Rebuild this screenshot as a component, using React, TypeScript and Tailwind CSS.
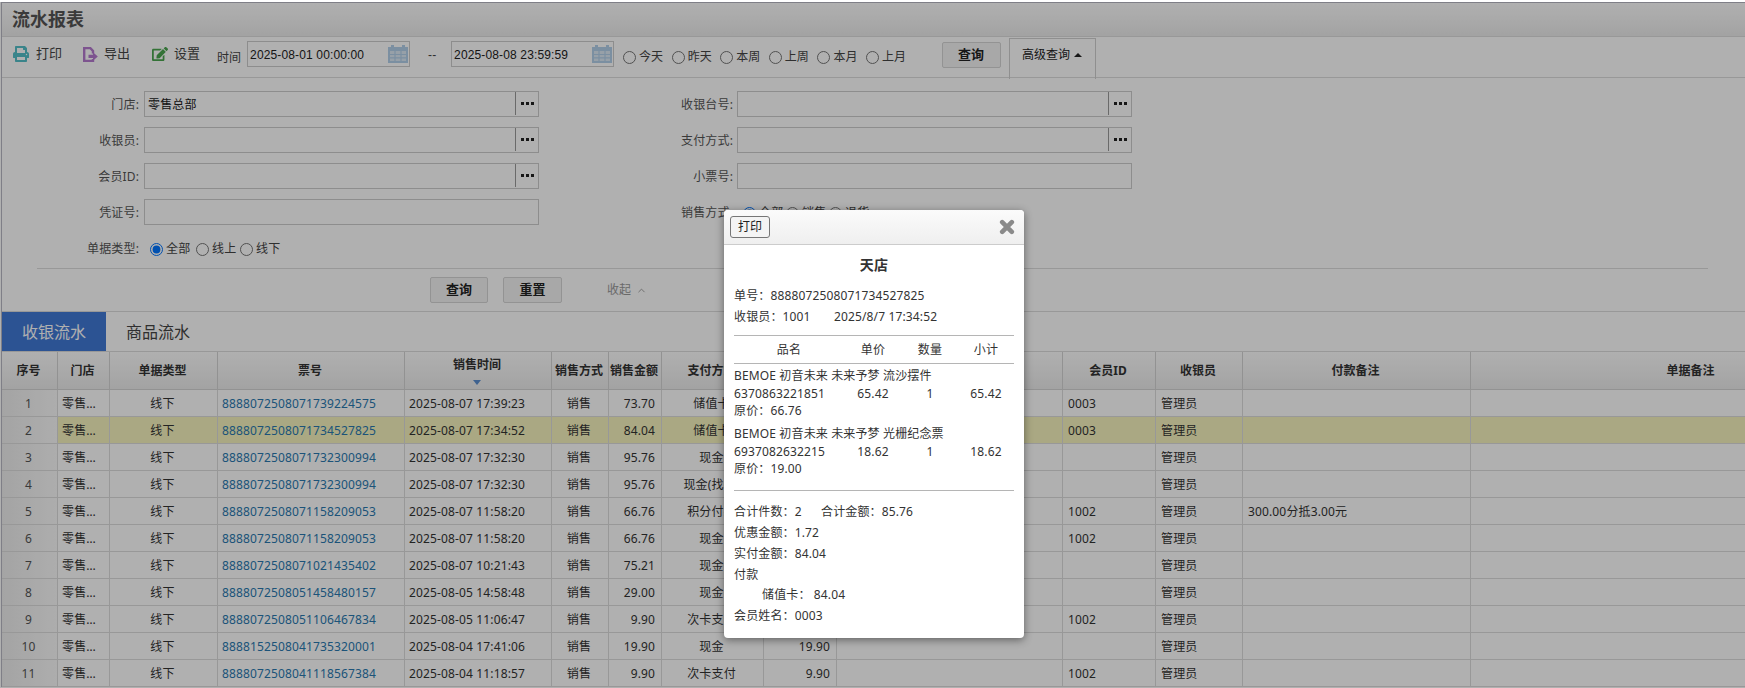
import { ChevronUp } from 'lucide-react'
import { FaEdit, FaPrint } from 'react-icons/fa'

const rows = [
  { no: '8888072508071739224575', time: '2025-08-07 17:39:23', amount: '73.70', pay: '储值卡', member: '0003', remark: '' },
  { no: '8888072508071734527825', time: '2025-08-07 17:34:52', amount: '84.04', pay: '储值卡', member: '0003', remark: '' },
  { no: '8888072508071732300994', time: '2025-08-07 17:32:30', amount: '95.76', pay: '现金', member: '', remark: '' },
  { no: '8888072508071732300994', time: '2025-08-07 17:32:30', amount: '95.76', pay: '现金(找零)', member: '', remark: '' },
  { no: '8888072508071158209053', time: '2025-08-07 11:58:20', amount: '66.76', pay: '积分付款', member: '1002', remark: '300.00分抵3.00元' },
  { no: '8888072508071158209053', time: '2025-08-07 11:58:20', amount: '66.76', pay: '现金', member: '1002', remark: '' },
  { no: '8888072508071021435402', time: '2025-08-07 10:21:43', amount: '75.21', pay: '现金', member: '', remark: '' },
  { no: '8888072508051458480157', time: '2025-08-05 14:58:48', amount: '29.00', pay: '现金', member: '', remark: '' },
  { no: '8888072508051106467834', time: '2025-08-05 11:06:47', amount: '9.90', pay: '次卡支付', member: '1002', remark: '' },
  { no: '8888152508041735320001', time: '2025-08-04 17:41:06', amount: '19.90', pay: '现金', member: '', remark: '' },
  { no: '8888072508041118567384', time: '2025-08-04 11:18:57', amount: '9.90', pay: '次卡支付', member: '1002', remark: '' },
]

const columns = [
  { title: '序号', w: 56 },
  { title: '门店', w: 52 },
  { title: '单据类型', w: 108 },
  { title: '票号', w: 187 },
  { title: '销售时间', w: 147 },
  { title: '销售方式', w: 57 },
  { title: '销售金额', w: 53 },
  { title: '支付方式', w: 102 },
  { title: '实付金额', w: 73 },
  { title: '', w: 226 },
  { title: '会员ID', w: 93 },
  { title: '收银员', w: 87 },
  { title: '付款备注', w: 228 },
  { title: '单据备注', w: 442 },
]

function CalendarIcon() {
  return (
    <svg width="20" height="18" viewBox="0 0 20 18" className="shrink-0">
      <path d="M0 2h3V0h3v2h8V0h3v2h3v16H0z" fill="#b3cfe9" />
      <path d="M2 6h16v10H2z" fill="#dbe8f4" />
      <path d="M7 6v10M13 6v10M2 9.5h16M2 12.8h16" stroke="#b3cfe9" strokeWidth="1.2" />
    </svg>
  )
}

function ExportIcon() {
  return (
    <svg width="15" height="15" viewBox="0 0 15 15" className="shrink-0">
      <path d="M10 12v2H1.2V1h6l2.8 3v2.5" fill="none" stroke="#b57ad0" strokeWidth="2.4" />
      <path d="M5.5 7.8h4.5V5.2L14.8 9.5 10 13.8V11H5.5z" fill="#b57ad0" />
    </svg>
  )
}

function CloseIcon() {
  return (
    <svg width="16" height="16" viewBox="0 0 16 16" className="shrink-0">
      <path d="M3.2 3.2l9.6 9.6M12.8 3.2l-9.6 9.6" stroke="#8a8a8a" strokeWidth="4.6" strokeLinecap="round" />
    </svg>
  )
}

function DateField({ value }: { value: string }) {
  return (
    <div className="mt-[4px] flex h-[26px] w-[163px] items-center border border-[#cdcdcd] pl-[2px] pr-[1px] font-['Liberation_Sans',sans-serif] text-[12px] text-[#222]">
      <span className="flex-1 pt-[2px]">{value}</span>
      <CalendarIcon />
    </div>
  )
}

function Radio({ label, checked, className }: { label: string; checked?: boolean; className: string }) {
  return (
    <label className={`flex items-center gap-[3px] pt-[2px] text-[12px] text-[#444] ${className}`}>
      <input type="radio" readOnly checked={!!checked} className="h-[13px] w-[13px] shrink-0" />
      <span>{label}</span>
    </label>
  )
}

function Field({ label, value, lookup, labelClass }: { label: string; value?: string; lookup?: boolean; labelClass: string }) {
  return (
    <>
      <span className={`pt-[2px] text-right text-[12px] text-[#555] ${labelClass}`}>{label}</span>
      <div className="flex h-[26px] w-[395px] items-center border border-[#cdcdcd]">
        <span className="flex-1 pl-[3px] pt-[2px] text-[12px] text-[#222]">{value}</span>
        {lookup && (
          <span className="flex h-[23px] w-[23px] items-center justify-center gap-[2px] self-start border-l border-[#9a9a9a]">
            <i className="h-[3px] w-[3px] bg-[#222]" />
            <i className="h-[3px] w-[3px] bg-[#222]" />
            <i className="h-[3px] w-[3px] bg-[#222]" />
          </span>
        )}
      </div>
    </>
  )
}

function GrayButton({ label, className }: { label: string; className: string }) {
  return (
    <button className={`h-[26px] rounded-[2px] border border-[#d5d5d5] bg-[#f4f4f4] text-[13px] font-bold text-[#222] ${className}`}>
      {label}
    </button>
  )
}

const cell = 'border-r border-b border-[#dcdcdc] pl-[4px] pr-[6px] pt-[2px] truncate'

function ReceiptItem({ name, code, price, qty, total, origin, className }: { name: string; code: string; price: string; qty: string; total: string; origin: string; className?: string }) {
  return (
    <div className={className}>
      <div className="h-[23px] leading-[23px] whitespace-nowrap">{name}</div>
      <div className="grid h-[14px] grid-cols-[110px_58px_56px_56px] leading-[14px]">
        <span>{code}</span>
        <span className="text-center">{price}</span>
        <span className="text-center">{qty}</span>
        <span className="text-center">{total}</span>
      </div>
      <div className="h-[20px] leading-[20px]">{origin}</div>
    </div>
  )
}

export default function App() {
  return (
    <div className="relative h-[688px] w-[1745px] overflow-hidden bg-white font-['Noto_Sans','Noto_Sans_CJK_SC',sans-serif] tracking-[0.14px]">
      <div className="ml-[1px] mt-[2px] border-l border-t border-[#b9b9c4]">
        <div className="flex h-[34px] items-center border-b border-[#dcdcdc] bg-linear-to-b from-white to-[#ececec] pl-[10px] text-[18px] font-bold tracking-normal text-[#555]">
          流水报表
        </div>

        <div className="flex h-[41px] items-start border-b border-[#dcdcdc]">
          <div className="ml-[11px] mt-[4px] flex h-[26px] items-center gap-[7px] text-[13px] tracking-normal text-[#444]">
            <FaPrint size={16} color="#55bfc8" />
            <span>打印</span>
          </div>
          <div className="ml-[21px] mt-[4px] flex h-[26px] items-center gap-[6px] text-[13px] tracking-normal text-[#444]">
            <ExportIcon />
            <span>导出</span>
          </div>
          <div className="ml-[22px] mt-[4px] flex h-[26px] items-center gap-[6px] text-[13px] tracking-normal text-[#444]">
            <FaEdit size={16} color="#4aa64f" />
            <span>设置</span>
          </div>
          <span className="ml-[17px] mt-[12px] text-[12px] tracking-normal text-[#444]">时间</span>
          <div className="ml-[6px]">
            <DateField value="2025-08-01 00:00:00" />
          </div>
          <span className="ml-[18px] mt-[9px] w-[23px] font-['Liberation_Sans',sans-serif] text-[12px] text-[#444]">--</span>
          <DateField value="2025-08-08 23:59:59" />
          <div className="ml-[9px] mt-[6px] flex h-[26px] items-center">
            {['今天', '昨天', '本周', '上周', '本月', '上月'].map((d) => (
              <Radio key={d} label={d} className="w-[48.6px] tracking-normal" />
            ))}
          </div>
          <GrayButton label="查询" className="ml-[27px] mt-[5px] w-[59px] tracking-normal" />
          <div className="ml-[8px] mt-[1px] flex h-[41px] w-[87px] justify-center gap-[4px] border-x border-t border-[#cfcfcf] pt-[7px] text-[12px] tracking-normal text-[#222]">
            <span>高级查询</span>
            <span className="mt-[7px] h-0 w-0 border-x-[4px] border-b-[4px] border-x-transparent border-b-[#222]" />
          </div>
        </div>

        <div className="border-b border-[#dcdcdc] pb-[8px] pt-[13px]">
          <div className="flex flex-col gap-[10px]">
            <div className="flex h-[26px] items-center">
              <Field label="门店:" value="零售总部" lookup labelClass="mr-[5px] w-[137px]" />
              <Field label="收银台号:" lookup labelClass="mr-[4px] w-[194px]" />
            </div>
            <div className="flex h-[26px] items-center">
              <Field label="收银员:" lookup labelClass="mr-[5px] w-[137px]" />
              <Field label="支付方式:" lookup labelClass="mr-[4px] w-[194px]" />
            </div>
            <div className="flex h-[26px] items-center">
              <Field label="会员ID:" lookup labelClass="mr-[5px] w-[137px]" />
              <Field label="小票号:" labelClass="mr-[4px] w-[194px]" />
            </div>
            <div className="flex h-[26px] items-center">
              <Field label="凭证号:" labelClass="mr-[5px] w-[137px]" />
              <span className="mr-[10px] w-[194px] pt-[2px] text-right text-[12px] text-[#555]">销售方式:</span>
              <Radio label="全部" checked className="w-[43px]" />
              <Radio label="销售" className="w-[43px]" />
              <Radio label="退货" className="w-[43px]" />
            </div>
            <div className="flex h-[26px] items-center">
              <span className="mr-[11px] w-[137px] pt-[2px] text-right text-[12px] text-[#555]">单据类型:</span>
              <Radio label="全部" checked className="w-[46px]" />
              <Radio label="线上" className="w-[44px]" />
              <Radio label="线下" className="w-[44px]" />
            </div>
          </div>
          <div className="ml-[35px] mt-[7px] h-px w-[1671px] bg-[#dcdcdc]" />
          <div className="mt-[8px] flex items-center">
            <GrayButton label="查询" className="ml-[428px] w-[58px] tracking-normal" />
            <GrayButton label="重置" className="ml-[15px] w-[59px] tracking-normal" />
            <span className="ml-[45px] flex items-center gap-[5px] text-[12px] tracking-normal text-[#999]">
              收起
              <ChevronUp size={11} />
            </span>
          </div>
        </div>

        <div className="flex h-[40px] items-stretch border-b border-[#dcdcdc] text-[16px] tracking-normal">
          <div className="flex w-[104px] items-center justify-center bg-[#4179d6] text-white">收银流水</div>
          <div className="flex items-center pl-[20px] text-[#444]">商品流水</div>
        </div>

        <table className="w-[1911px] table-fixed border-separate border-spacing-0 text-[12px] text-[#333]">
          <colgroup>
            {columns.map((c, i) => (
              <col key={i} style={{ width: c.w }} />
            ))}
          </colgroup>
          <thead>
            <tr className="h-[38px]">
              {columns.map((c, i) => (
                <th key={i} className="border-b border-r border-[#d4d4d4] bg-linear-to-b from-white to-[#ececec] pr-[2px] text-center font-bold tracking-normal text-[#333]">
                  {c.title === '销售时间' ? (
                    <div className="flex flex-col items-center gap-[6px]">
                      <span>{c.title}</span>
                      <span className="h-0 w-0 border-x-[4px] border-t-[5px] border-x-transparent border-t-[#5c8fd0]" />
                    </div>
                  ) : (
                    c.title
                  )}
                </th>
              ))}
            </tr>
          </thead>
          <tbody>
            {rows.map((r, i) => {
              const tint = i === 1 ? 'bg-[#f6f4be]' : ''
              return (
                <tr key={i} className="h-[27px]">
                  <td className={`${cell} bg-linear-to-r from-[#eeeeee] to-[#fbfbfb] text-center text-[#555]`}>{i + 1}</td>
                  <td className={`${cell} ${tint}`}>零售总部</td>
                  <td className={`${cell} ${tint} text-center`}>线下</td>
                  <td className={`${cell} ${tint} text-[#2a79b0]`}>{r.no}</td>
                  <td className={`${cell} ${tint}`}>{r.time}</td>
                  <td className={`${cell} ${tint} text-center`}>销售</td>
                  <td className={`${cell} ${tint} text-right`}>{r.amount}</td>
                  <td className={`${cell} ${tint} text-center`}>{r.pay}</td>
                  <td className={`${cell} ${tint} text-right`}>{r.amount}</td>
                  <td className={`${cell} ${tint}`} />
                  <td className={`${cell} ${tint} pl-[5px]`}>{r.member}</td>
                  <td className={`${cell} ${tint} pl-[5px]`}>管理员</td>
                  <td className={`${cell} ${tint} pl-[5px]`}>{r.remark}</td>
                  <td className={`${cell} ${tint}`} />
                </tr>
              )
            })}
          </tbody>
        </table>
      </div>

      {/* mask */}
      <div className="absolute inset-x-0 bottom-0 top-[2px] bg-black/[.31]" />

      {/* receipt dialog */}
      <div className="absolute left-[724px] top-[210px] h-[428px] w-[300px] rounded-[4px] bg-white text-[12px] text-[#333] shadow-[0_2px_8px_rgba(0,0,0,0.45)]">
        <div className="flex h-[35px] items-center justify-between rounded-t-[4px] border-b border-[#ccc] bg-linear-to-b from-[#fbfbfb] to-[#efefef] pl-[6px] pr-[9px]">
          <button className="h-[22px] w-[40px] rounded-[3px] border border-[#767676] bg-[#f4f4f4] text-[12px] tracking-normal text-[#222]">打印</button>
          <CloseIcon />
        </div>
        <div className="px-[10px]">
          <div className="mt-[10px] h-[20px] text-center text-[14px] font-bold leading-[20px] text-[#333]">天店</div>
          <div className="mt-[10px] h-[21px] leading-[21px]">单号：8888072508071734527825</div>
          <div className="flex h-[21px] leading-[21px]">
            <span className="w-[100px]">收银员：1001</span>
            <span>2025/8/7 17:34:52</span>
          </div>
          <div className="mt-[8px] grid h-[29px] grid-cols-[110px_58px_56px_56px] items-center border-y border-[#b5b5b5] text-center">
            <span>品名</span>
            <span>单价</span>
            <span>数量</span>
            <span>小计</span>
          </div>
          <ReceiptItem name="BEMOE 初音未来 未来予梦 流沙摆件" code="6370863221851" price="65.42" qty="1" total="65.42" origin="原价：66.76" />
          <ReceiptItem className="mt-[1px]" name="BEMOE 初音未来 未来予梦 光栅纪念票" code="6937082632215" price="18.62" qty="1" total="18.62" origin="原价：19.00" />
          <div className="mt-[11px] h-px bg-[#b5b5b5]" />
          <div className="mt-[10px] flex h-[21px] leading-[21px]">
            <span className="w-[87px]">合计件数：2</span>
            <span>合计金额：85.76</span>
          </div>
          <div className="h-[21px] leading-[21px]">优惠金额：1.72</div>
          <div className="h-[21px] leading-[21px]">实付金额：84.04</div>
          <div className="h-[21px] leading-[21px]">付款</div>
          <div className="h-[20px] pl-[28px] leading-[20px]">储值卡： 84.04</div>
          <div className="h-[21px] leading-[21px]">会员姓名：0003</div>
        </div>
      </div>
    </div>
  )
}
